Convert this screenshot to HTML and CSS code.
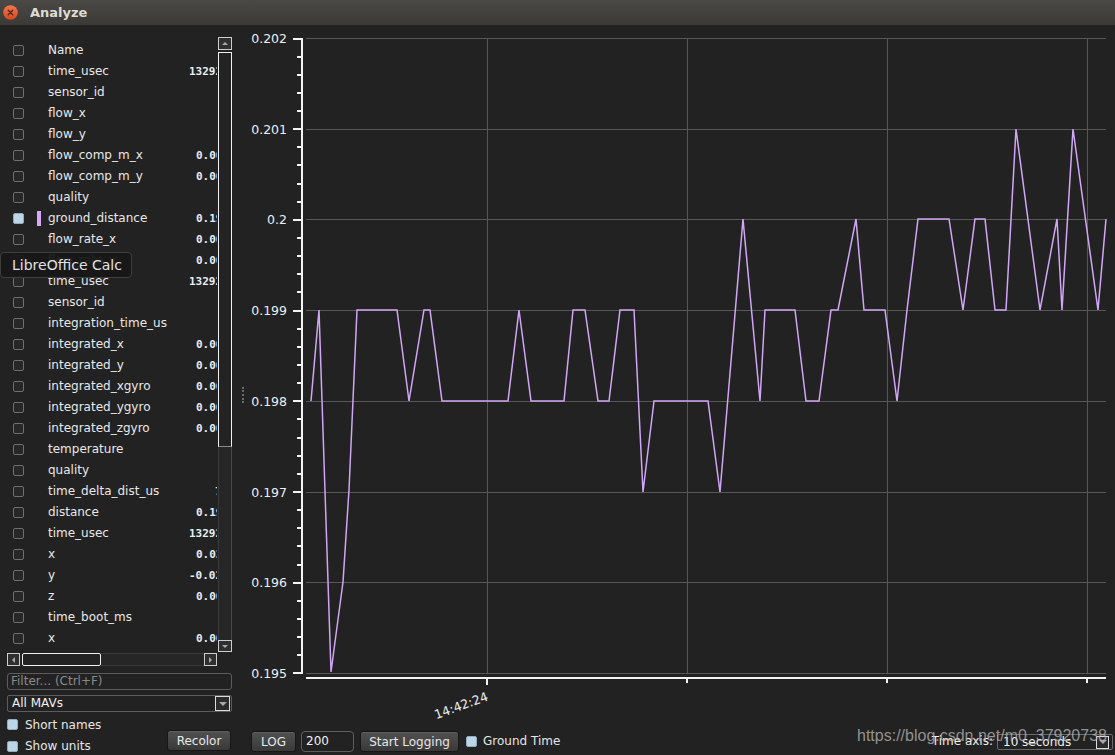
FILE: index.html
```html
<!DOCTYPE html>
<html>
<head>
<meta charset="utf-8">
<title>Analyze</title>
<link rel="stylesheet" href="styles.css">
</head>
<body>
<div class="window">
  <div class="titlebar">
    <svg class="close" width="15" height="15" viewBox="0 0 15 15">
      <defs>
        <linearGradient id="cg" x1="0" y1="0" x2="0" y2="1">
          <stop offset="0" stop-color="#f27a4c"/>
          <stop offset="1" stop-color="#d9461a"/>
        </linearGradient>
      </defs>
      <circle cx="7.5" cy="7.5" r="7.3" fill="url(#cg)"/>
      <path d="M5.2 5.2L9.8 9.8M9.8 5.2L5.2 9.8" stroke="#4a2a1e" stroke-width="1.3" stroke-linecap="round"/>
    </svg>
    <span class="title">Analyze</span>
  </div>
  <div class="main">
    <div class="left">
      <div class="listarea">
        <div class="list">
          <div class="row"><span class="cb"></span><span class="bar"></span><span class="name">Name</span><span class="val"></span></div>
          <div class="row"><span class="cb"></span><span class="bar"></span><span class="name">time_usec</span><span class="val w">1329238451</span></div>
          <div class="row"><span class="cb"></span><span class="bar"></span><span class="name">sensor_id</span><span class="val"></span></div>
          <div class="row"><span class="cb"></span><span class="bar"></span><span class="name">flow_x</span><span class="val"></span></div>
          <div class="row"><span class="cb"></span><span class="bar"></span><span class="name">flow_y</span><span class="val"></span></div>
          <div class="row"><span class="cb"></span><span class="bar"></span><span class="name">flow_comp_m_x</span><span class="val">0.0000</span></div>
          <div class="row"><span class="cb"></span><span class="bar"></span><span class="name">flow_comp_m_y</span><span class="val">0.0000</span></div>
          <div class="row"><span class="cb"></span><span class="bar"></span><span class="name">quality</span><span class="val"></span></div>
          <div class="row"><span class="cb on"></span><span class="bar purple"></span><span class="name">ground_distance</span><span class="val">0.1980</span></div>
          <div class="row"><span class="cb"></span><span class="bar"></span><span class="name">flow_rate_x</span><span class="val">0.0000</span></div>
          <div class="row"><span class="cb"></span><span class="bar"></span><span class="name">flow_rate_y</span><span class="val">0.0000</span></div>
          <div class="row"><span class="cb"></span><span class="bar"></span><span class="name">time_usec</span><span class="val w">1329238451</span></div>
          <div class="row"><span class="cb"></span><span class="bar"></span><span class="name">sensor_id</span><span class="val"></span></div>
          <div class="row"><span class="cb"></span><span class="bar"></span><span class="name">integration_time_us</span><span class="val"></span></div>
          <div class="row"><span class="cb"></span><span class="bar"></span><span class="name">integrated_x</span><span class="val">0.0000</span></div>
          <div class="row"><span class="cb"></span><span class="bar"></span><span class="name">integrated_y</span><span class="val">0.0000</span></div>
          <div class="row"><span class="cb"></span><span class="bar"></span><span class="name">integrated_xgyro</span><span class="val">0.0000</span></div>
          <div class="row"><span class="cb"></span><span class="bar"></span><span class="name">integrated_ygyro</span><span class="val">0.0000</span></div>
          <div class="row"><span class="cb"></span><span class="bar"></span><span class="name">integrated_zgyro</span><span class="val">0.0000</span></div>
          <div class="row"><span class="cb"></span><span class="bar"></span><span class="name">temperature</span><span class="val"></span></div>
          <div class="row"><span class="cb"></span><span class="bar"></span><span class="name">quality</span><span class="val"></span></div>
          <div class="row"><span class="cb"></span><span class="bar"></span><span class="name">time_delta_dist_us</span><span class="val s">7</span></div>
          <div class="row"><span class="cb"></span><span class="bar"></span><span class="name">distance</span><span class="val">0.1980</span></div>
          <div class="row"><span class="cb"></span><span class="bar"></span><span class="name">time_usec</span><span class="val w">1329238451</span></div>
          <div class="row"><span class="cb"></span><span class="bar"></span><span class="name">x</span><span class="val">0.0312</span></div>
          <div class="row"><span class="cb"></span><span class="bar"></span><span class="name">y</span><span class="val w">-0.0215</span></div>
          <div class="row"><span class="cb"></span><span class="bar"></span><span class="name">z</span><span class="val">0.0000</span></div>
          <div class="row"><span class="cb"></span><span class="bar"></span><span class="name">time_boot_ms</span><span class="val"></span></div>
          <div class="row"><span class="cb"></span><span class="bar"></span><span class="name">x</span><span class="val">0.0000</span></div>
        </div>
        <div class="vscroll">
          <div class="sbtn up"></div>
          <div class="thumb"></div>
          <div class="track"></div>
          <div class="sbtn down"></div>
        </div>
      </div>
      <div class="hscroll">
        <div class="hbtn lft"></div>
        <div class="hthumb"></div>
        <div class="htrack"></div>
        <div class="hbtn rgt"></div>
      </div>
      <div class="filter">Filter... (Ctrl+F)</div>
      <div class="combo mavs"><span class="ctext">All MAVs</span><span class="drop"></span></div>
      <div class="opts">
        <div class="optcol">
          <div class="opt"><span class="cb on"></span><span>Short names</span></div>
          <div class="opt"><span class="cb on"></span><span>Show units</span></div>
        </div>
        <button class="btn recolor">Recolor</button>
      </div>
    </div>
    <div class="splitter"><span class="grip"></span></div>
    <div class="right">
      <svg class="chart" width="867" height="700" viewBox="248 25 867 700">
        <g stroke="#575757" stroke-width="1">
          <line x1="306" y1="38.5" x2="1106" y2="38.5"/>
          <line x1="306" y1="129.5" x2="1106" y2="129.5"/>
          <line x1="306" y1="219.5" x2="1106" y2="219.5"/>
          <line x1="306" y1="310.5" x2="1106" y2="310.5"/>
          <line x1="306" y1="401.5" x2="1106" y2="401.5"/>
          <line x1="306" y1="492.5" x2="1106" y2="492.5"/>
          <line x1="306" y1="582.5" x2="1106" y2="582.5"/>
          <line x1="306" y1="673.5" x2="1106" y2="673.5"/>
          <line x1="487.5" y1="38" x2="487.5" y2="673"/>
          <line x1="687.5" y1="38" x2="687.5" y2="673"/>
          <line x1="887.5" y1="38" x2="887.5" y2="673"/>
          <line x1="1087.5" y1="38" x2="1087.5" y2="673"/>
        </g>
        <g fill="#f4f4f4">
          <rect x="301" y="38" width="2" height="636"/>
          <rect x="293" y="38" width="8" height="2"/>
          <rect x="293" y="128" width="8" height="2"/>
          <rect x="293" y="219" width="8" height="2"/>
          <rect x="293" y="310" width="8" height="2"/>
          <rect x="293" y="400" width="8" height="2"/>
          <rect x="293" y="491" width="8" height="2"/>
          <rect x="293" y="582" width="8" height="2"/>
          <rect x="293" y="672" width="8" height="2"/>
          <rect x="306" y="677" width="800" height="2"/>
          <rect x="486" y="679" width="2" height="6"/>
          <rect x="686" y="679" width="2" height="4"/>
          <rect x="886" y="679" width="2" height="4"/>
          <rect x="1086" y="679" width="2" height="4"/>
        </g>
        <g stroke="#f4f4f4" stroke-width="2">
          <line x1="297" y1="57" x2="301" y2="57"/>
          <line x1="297" y1="75" x2="301" y2="75"/>
          <line x1="297" y1="93" x2="301" y2="93"/>
          <line x1="297" y1="111" x2="301" y2="111"/>
          <line x1="297" y1="147" x2="301" y2="147"/>
          <line x1="297" y1="165" x2="301" y2="165"/>
          <line x1="297" y1="184" x2="301" y2="184"/>
          <line x1="297" y1="202" x2="301" y2="202"/>
          <line x1="297" y1="238" x2="301" y2="238"/>
          <line x1="297" y1="256" x2="301" y2="256"/>
          <line x1="297" y1="274" x2="301" y2="274"/>
          <line x1="297" y1="292" x2="301" y2="292"/>
          <line x1="297" y1="329" x2="301" y2="329"/>
          <line x1="297" y1="347" x2="301" y2="347"/>
          <line x1="297" y1="365" x2="301" y2="365"/>
          <line x1="297" y1="383" x2="301" y2="383"/>
          <line x1="297" y1="419" x2="301" y2="419"/>
          <line x1="297" y1="438" x2="301" y2="438"/>
          <line x1="297" y1="456" x2="301" y2="456"/>
          <line x1="297" y1="474" x2="301" y2="474"/>
          <line x1="297" y1="510" x2="301" y2="510"/>
          <line x1="297" y1="528" x2="301" y2="528"/>
          <line x1="297" y1="546" x2="301" y2="546"/>
          <line x1="297" y1="565" x2="301" y2="565"/>
          <line x1="297" y1="601" x2="301" y2="601"/>
          <line x1="297" y1="619" x2="301" y2="619"/>
          <line x1="297" y1="637" x2="301" y2="637"/>
          <line x1="297" y1="655" x2="301" y2="655"/>
        </g>
        <g class="ylab">
          <text x="287" y="43">0.202</text>
          <text x="287" y="134">0.201</text>
          <text x="287" y="224">0.2</text>
          <text x="287" y="315">0.199</text>
          <text x="287" y="406">0.198</text>
          <text x="287" y="497">0.197</text>
          <text x="287" y="587">0.196</text>
          <text x="287" y="678">0.195</text>
        </g>
        <text class="xlab" x="489" y="700" transform="rotate(-20 489 700)">14:42:24</text>
        <polyline class="series" points="311,401 319,310 331,672 343,582 349,490 357,310 397,310 409,401 424,310 430,310 442,401 508,401 519,310 531,401 564,401 573,310 585,310 598,401 609,401 620,310 634,310 643,492 654,401 708,401 720,492 743,219 760,401 765,310 795,310 806,401 819,401 831,310 838,310 856,219 864,310 885,310 897,401 907,310 918,219 949,219 963,310 975,219 985,219 995,310 1006,310 1016,129 1040,310 1057,219 1062,310 1073,129 1098,310 1106,219"/>
      </svg>
      <div class="controls">
        <button class="btn log">LOG</button>
        <div class="num">200</div>
        <button class="btn start">Start Logging</button>
        <span class="cb on gt"></span>
        <span class="gtl">Ground Time</span>
        <span class="spacer"></span>
        <span class="tal">Time axis:</span>
        <div class="combo tax"><span class="ctext">10 seconds</span><span class="drop"></span></div>
      </div>
    </div>
  </div>
</div>
<div class="tooltip">LibreOffice Calc</div>
<div class="watermark">https://blog.csdn.net/m0_37920738</div>
</body>
</html>
```

FILE: styles.css
```css
* { box-sizing: border-box; }
html, body { margin: 0; padding: 0; }
body {
  width: 1115px;
  height: 755px;
  overflow: hidden;
  position: relative;
  background: #222222;
  color: #e6e6e6;
  font-family: "DejaVu Sans", sans-serif;
  font-size: 12px;
}
.window { width: 1115px; height: 755px; display: flex; flex-direction: column; }

/* title bar */
.titlebar {
  height: 25px;
  flex: none;
  display: flex;
  align-items: center;
  background: linear-gradient(#4a4945, #3b3a36);
}
.close { margin-left: 3px; margin-top: -1px; flex: none; }
.title { margin-left: 12px; font-weight: bold; font-size: 13px; color: #dfdbd2; }

.main { flex: 1; display: flex; min-height: 0; }

/* left panel */
.left {
  width: 238px;
  flex: none;
  padding: 12px 6px 0 7px;
  display: flex;
  flex-direction: column;
}
.listarea { height: 615px; width: 225px; display: flex; flex: none; }
.list { flex: 1; min-width: 0; overflow: hidden; padding-top: 3px; }
.row { height: 21px; display: flex; align-items: center; line-height: 21px; white-space: nowrap; padding-right: 1px; }
.cb {
  width: 11px;
  height: 11px;
  flex: none;
  border: 1px solid #6e6e6e;
  border-radius: 2px;
  background: #272727;
}
.cb.on { background: #bcd5e7; border-color: #92abbd; }
.row .cb { margin-left: 6px; }
.bar { width: 4px; height: 15px; margin-left: 13px; flex: none; }
.bar.purple { background: #d6a8f6; }
.name { margin-left: 7px; flex: 1; min-width: 0; color: #e8e8e8; }
.val {
  width: 31px;
  flex: none;
  overflow: hidden;
  padding-left: 10px;
  font-family: "DejaVu Sans Mono", monospace;
  font-weight: bold;
  font-size: 11px;
  color: #e6edf4;
}
.val.w { padding-left: 3px; }
.val.s { padding-left: 29px; }

/* vertical scrollbar */
.vscroll { width: 14px; flex: none; display: flex; flex-direction: column; }
.sbtn {
  height: 13px;
  flex: none;
  border: 1px solid #cdcdcd;
  background: #2f2f2f;
  display: flex;
  align-items: center;
  justify-content: center;
}
.sbtn.down { height: 12px; }
.sbtn.up::after {
  content: "";
  border-left: 3px solid transparent;
  border-right: 3px solid transparent;
  border-bottom: 3px solid #a8a8a8;
}
.sbtn.down::after {
  content: "";
  border-left: 3px solid transparent;
  border-right: 3px solid transparent;
  border-top: 3px solid #a8a8a8;
}
.thumb {
  margin-top: 2px;
  height: 395px;
  flex: none;
  border: 1px solid #f0f0f0;
  border-bottom-color: #8a8a8a;
  background: #232323;
}
.track { flex: 1; border-left: 1px solid #3a3a3a; border-right: 1px solid #474747; background: #262626; }

/* horizontal scrollbar */
.hscroll { margin-top: 1px; width: 210px; height: 13px; display: flex; flex: none; }
.hbtn {
  width: 13px;
  flex: none;
  border: 1px solid #cdcdcd;
  background: #2f2f2f;
  display: flex;
  align-items: center;
  justify-content: center;
}
.hbtn.lft::after {
  content: "";
  border-top: 3px solid transparent;
  border-bottom: 3px solid transparent;
  border-right: 3px solid #a8a8a8;
}
.hbtn.rgt::after {
  content: "";
  border-top: 3px solid transparent;
  border-bottom: 3px solid transparent;
  border-left: 3px solid #a8a8a8;
}
.hthumb { margin-left: 2px; width: 79px; flex: none; border: 1px solid #f0f0f0; border-radius: 2px; background: #232323; }
.htrack { flex: 1; border-top: 1px solid #3a3a3a; border-bottom: 1px solid #3a3a3a; background: #262626; }

/* filter + combo */
.filter {
  margin-top: 7px;
  height: 17px;
  width: 225px;
  flex: none;
  border: 1px solid #5c5c5c;
  border-radius: 3px;
  padding-left: 3px;
  line-height: 15px;
  color: #8a8a8a;
  background: #222;
}
.combo {
  display: flex;
  align-items: center;
  border: 1px solid #5c5c5c;
  border-radius: 2px;
  background: #222;
}
.combo.mavs { margin-top: 5px; height: 17px; width: 225px; flex: none; }
.ctext { flex: 1; padding-left: 4px; color: #f0f0f0; line-height: 15px; white-space: nowrap; }
.drop {
  width: 15px;
  height: 15px;
  flex: none;
  border: 1px solid #dcdcdc;
  background: #2c2c2c;
  display: flex;
  align-items: center;
  justify-content: center;
  margin-right: 1px;
}
.drop::after {
  content: "";
  border-left: 4px solid transparent;
  border-right: 4px solid transparent;
  border-top: 4px solid #a8a8a8;
}

.opts { display: flex; justify-content: space-between; align-items: flex-start; margin-top: 1px; }
.optcol { display: flex; flex-direction: column; }
.opt { height: 22px; display: flex; align-items: center; }
.opt:first-child { margin-top: 1px; height: 21px; }
.opt span:last-child { margin-left: 7px; color: #e6e6e6; }

.btn {
  height: 21px;
  border: 1px solid #171717;
  border-radius: 3px;
  background: linear-gradient(#515151, #393939);
  box-shadow: inset 0 1px 0 #5e5e5e;
  color: #e8e8e8;
  font-family: "DejaVu Sans", sans-serif;
  font-size: 12px;
  padding: 0;
  flex: none;
}
.recolor { width: 64px; margin-top: 17px; margin-right: 1px; }

/* splitter */
.splitter { width: 10px; flex: none; display: flex; align-items: center; justify-content: center; padding-top: 10px; }
.grip { width: 0; height: 16px; border-left: 2px dotted #6a6a6a; }

/* right panel */
.right { flex: 1; min-width: 0; display: flex; flex-direction: column; }
.chart { display: block; flex: none; }
.ylab text {
  font-family: "DejaVu Sans", sans-serif;
  font-size: 12.5px;
  fill: #eaf0f6;
  text-anchor: end;
}
.xlab {
  font-family: "DejaVu Sans", sans-serif;
  font-size: 12.5px;
  fill: #eaf0f6;
  text-anchor: end;
}
.series { fill: none; stroke: #d2a6f6; stroke-width: 1.5; stroke-linejoin: miter; }

.controls { flex: 1; display: flex; align-items: flex-start; padding-top: 6px; }
.log { width: 45px; margin-left: 3px; }
.num {
  width: 53px;
  height: 21px;
  margin-left: 5px;
  border: 1px solid #5e5e5e;
  border-radius: 4px;
  padding-left: 4px;
  line-height: 19px;
  color: #f0f0f0;
  flex: none;
}
.start { width: 99px; margin-left: 6px; }
.cb.gt { margin-left: 7px; margin-top: 5px; }
.gtl { margin-left: 6px; line-height: 21px; color: #e6e6e6; }
.spacer { flex: 1; }
.tal { line-height: 21px; color: #f0f0f0; margin-right: 4px; }
.combo.tax { width: 116px; height: 16px; margin-top: 3px; margin-right: 2px; border-color: #6a6a6a; }
.combo.tax .ctext { padding-left: 5px; line-height: 14px; }
.combo.tax .drop { width: 13px; height: 13px; margin-right: 3px; }

/* overlays */
.tooltip {
  position: absolute;
  left: 0;
  top: 252px;
  width: 132px;
  height: 26px;
  background: rgba(24, 24, 24, 0.95);
  border: 1px solid #3e3e3e;
  border-radius: 4px;
  padding-left: 11px;
  font-size: 14px;
  line-height: 25px;
  color: #e2e2e2;
  white-space: nowrap;
}
.watermark {
  position: absolute;
  left: 857px;
  top: 727px;
  font-family: "Liberation Sans", Arial, sans-serif;
  font-size: 16px;
  line-height: 18px;
  color: rgba(185, 185, 185, 0.75);
  white-space: nowrap;
}
```
